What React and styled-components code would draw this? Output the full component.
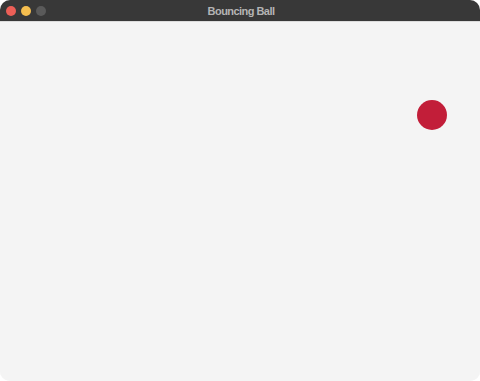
import React from "react";
import styled, { createGlobalStyle } from "styled-components";

const Global = createGlobalStyle`
  html, body { margin: 0; padding: 0; background: #ffffff; }
  body { font-family: "Liberation Sans", "Inter", sans-serif; }
`;

const Window = styled.div`
  width: 480px;
  height: 381px;
  border-radius: 10px;
  overflow: hidden;
  background: #f4f4f4;
  display: flex;
  flex-direction: column;
`;

const TitleBar = styled.div`
  box-sizing: border-box;
  height: 22px;
  flex: 0 0 22px;
  background: #383838;
  border-bottom: 1px solid #dcdcdc;
  display: grid;
  grid-template-columns: 1fr auto 1fr;
  align-items: center;
  padding: 1px 6px 0 6px;
`;

const Lights = styled.div`
  display: flex;
  gap: 5px;
  align-items: center;
`;

const Light = styled.span`
  width: 10px;
  height: 10px;
  border-radius: 50%;
  background: ${(p) => p.$color};
`;

const Title = styled.div`
  color: #b4b4b4;
  font-family: "Liberation Sans", Arial, sans-serif;
  font-size: 11px;
  font-weight: 700;
  letter-spacing: -0.55px;
  padding-left: 2px;
`;

const Canvas = styled.div`
  position: relative;
  flex: 1;
  background: #f4f4f4;
`;

const Ball = styled.div`
  position: absolute;
  width: 30px;
  height: 30px;
  border-radius: 50%;
  background: #c21e39;
`;

export default function App() {
  return (
    <>
      <Global />
      <Window>
        <TitleBar>
          <Lights>
            <Light $color="#ec5f57" />
            <Light $color="#f5be4f" />
            <Light $color="#5a5a5a" />
          </Lights>
          <Title>Bouncing Ball</Title>
          <div />
        </TitleBar>
        <Canvas>
          <Ball style={{ left: 417, top: 78 }} />
        </Canvas>
      </Window>
    </>
  );
}
